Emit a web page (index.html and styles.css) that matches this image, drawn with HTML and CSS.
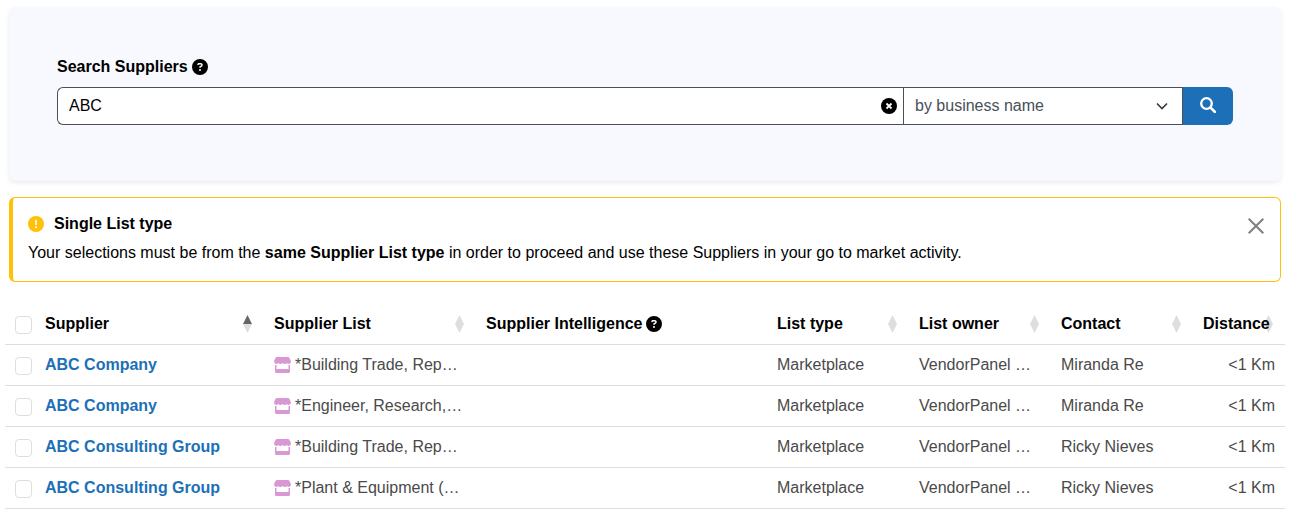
FILE: index.html
```html
<!DOCTYPE html>
<html lang="en">
<head>
    <meta charset="UTF-8">
    <meta name="viewport" content="width=device-width, initial-scale=1.0">
    <title>Search Suppliers</title>
    <link rel="stylesheet" href="styles.css">
</head>
<body>
    <!-- shared icons -->
    <svg class="sprite" aria-hidden="true">
        <symbol id="question" viewBox="0 0 512 512">
            <path fill="currentColor" d="M256 512A256 256 0 1 0 256 0a256 256 0 1 0 0 512zM169.8 165.3c7.9-22.3 29.1-37.3 52.8-37.3h58.3c34.9 0 63.1 28.3 63.1 63.1c0 22.6-12.1 43.5-31.7 54.8L280 264.4c-.2 13-10.9 23.6-24 23.6c-13.3 0-24-10.7-24-24V250.5c0-8.6 4.6-16.5 12.1-20.8l44.3-25.4c4.7-2.7 7.6-7.7 7.6-13.1c0-8.4-6.8-15.1-15.1-15.1H222.6c-3.4 0-6.4 2.1-7.5 5.3l-.4 1.2c-4.4 12.5-18.2 19-30.6 14.6s-19-18.2-14.6-30.6l.4-1.2zM224 352a32 32 0 1 1 64 0 32 32 0 1 1 -64 0z"/>
        </symbol>
        <symbol id="store" viewBox="0 0 17 16">
            <path fill="currentColor" d="M3 0h11q1 0 1.500 1l1.300 2.800q.500 2.700-2 3.200q-1.300 0-2-1q-.800 1-2.100 1t-2.200-1q-.900 1-2.200 1t-2.100-1q-.700 1-2 1q-2.500-.500-2-3.200l1.300-2.800q.500-1 1.500-1z"/>
            <path fill="currentColor" d="M1 8h1.500v4h12v-4h1.500v6.500q0 1.500-1.500 1.500h-12q-1.500 0-1.500-1.500z"/>
        </symbol>
        <symbol id="sort" viewBox="0 0 9 18">
            <path fill="currentColor" d="M4.500 0L9 9H0z"/>
            <path fill="#dedede" d="M0 9h9L4.500 18z"/>
        </symbol>
    </svg>

    <form class="searchPanel">
        <div class="searchLabel">
            <label for="supplierSearch">Search Suppliers</label>
            <svg class="icon"><use href="#question"/></svg>
        </div>
        <div class="searchGroup">
            <div class="searchText">
                <input type="text" id="supplierSearch" name="search" value="ABC">
                <button type="button" class="clearButton" aria-label="Clear">
                    <svg class="icon" viewBox="0 0 16 16">
                        <circle cx="8" cy="8" r="8"/>
                        <path d="M5.500 5.500l5 5M10.500 5.500l-5 5" stroke="#fff" stroke-width="1.800"/>
                    </svg>
                </button>
            </div>
            <div class="searchBy">
                <select name="searchBy" aria-label="Search by">
                    <option>by business name</option>
                </select>
                <svg class="chevron" viewBox="0 0 12 12"><path d="M1 3.500l5 5l5-5" fill="none" stroke="#343a40" stroke-width="1.600"/></svg>
            </div>
            <button type="submit" class="searchButton" aria-label="Search">
                <svg class="icon" viewBox="0 0 16 16"><path d="M10.800 10.800L15 15" stroke="#fff" stroke-width="2.600" stroke-linecap="round"/><circle cx="6.500" cy="6.500" r="5.300" fill="none" stroke="#fff" stroke-width="2.300"/></svg>
            </button>
        </div>
    </form>

    <div class="notice" role="alert">
        <div>
            <div class="noticeTitle">
                <svg class="icon" viewBox="0 0 16 16">
                    <circle cx="8" cy="8" r="8" fill="#ffc107"/>
                    <path d="M8 4.500v4" stroke="#fff" stroke-width="1.600" stroke-linecap="round"/>
                    <circle cx="8" cy="11.300" r="1" fill="#fff"/>
                </svg>
                <span>Single List type</span>
            </div>
            <p>Your selections must be from the <b>same Supplier List type</b> in order to proceed and use these Suppliers in your go to market activity.</p>
        </div>
        <button type="button" class="closeButton" aria-label="Close">
            <svg class="icon" viewBox="0 0 16 16"><path d="M.700 .700l14.600 14.600M15.300 .700L.700 15.300" stroke="#7f7f7f" stroke-width="2"/></svg>
        </button>
    </div>

    <table class="suppliers">
        <colgroup>
            <col class="colCheck">
            <col class="colSupplier">
            <col class="colList">
            <col class="colIntel">
            <col class="colInfo">
            <col class="colInfo">
            <col class="colInfo">
            <col class="colDistance">
        </colgroup>
        <thead>
            <tr>
                <th class="check"><input type="checkbox" aria-label="Select all"></th>
                <th>Supplier<svg class="sort sortAsc"><use href="#sort"/></svg></th>
                <th>Supplier List<svg class="sort"><use href="#sort"/></svg></th>
                <th><span class="withIcon">Supplier Intelligence <svg class="icon"><use href="#question"/></svg></span></th>
                <th>List type<svg class="sort"><use href="#sort"/></svg></th>
                <th>List owner<svg class="sort"><use href="#sort"/></svg></th>
                <th>Contact<svg class="sort"><use href="#sort"/></svg></th>
                <th>Distance<svg class="sort"><use href="#sort"/></svg></th>
            </tr>
        </thead>
        <tbody>
            <tr>
                <td class="check"><input type="checkbox" aria-label="Select ABC Company"></td>
                <td><a href="#">ABC Company</a></td>
                <td><span class="withIcon"><svg class="storeIcon"><use href="#store"/></svg>*Building Trade, Rep…</span></td>
                <td></td>
                <td>Marketplace</td>
                <td>VendorPanel …</td>
                <td>Miranda Re</td>
                <td class="distance">&lt;1 Km</td>
            </tr>
            <tr>
                <td class="check"><input type="checkbox" aria-label="Select ABC Company"></td>
                <td><a href="#">ABC Company</a></td>
                <td><span class="withIcon"><svg class="storeIcon"><use href="#store"/></svg>*Engineer, Research,…</span></td>
                <td></td>
                <td>Marketplace</td>
                <td>VendorPanel …</td>
                <td>Miranda Re</td>
                <td class="distance">&lt;1 Km</td>
            </tr>
            <tr>
                <td class="check"><input type="checkbox" aria-label="Select ABC Consulting Group"></td>
                <td><a href="#">ABC Consulting Group</a></td>
                <td><span class="withIcon"><svg class="storeIcon"><use href="#store"/></svg>*Building Trade, Rep…</span></td>
                <td></td>
                <td>Marketplace</td>
                <td>VendorPanel …</td>
                <td>Ricky Nieves</td>
                <td class="distance">&lt;1 Km</td>
            </tr>
            <tr>
                <td class="check"><input type="checkbox" aria-label="Select ABC Consulting Group"></td>
                <td><a href="#">ABC Consulting Group</a></td>
                <td><span class="withIcon"><svg class="storeIcon"><use href="#store"/></svg>*Plant &amp; Equipment (…</span></td>
                <td></td>
                <td>Marketplace</td>
                <td>VendorPanel …</td>
                <td>Ricky Nieves</td>
                <td class="distance">&lt;1 Km</td>
            </tr>
        </tbody>
    </table>
</body>
</html>
```
FILE: styles.css
```css
*{
    box-sizing: border-box;
}
body{
    margin: 0;
    padding: 7px 9px 0 5px;
    font-family: Arial, "Liberation Sans", sans-serif;
    font-size: 16px;
    line-height: 24px;
    color: #000;
    background: #fff;
}
button{
    padding: 0;
    border: 0;
    background: none;
    cursor: pointer;
}
.sprite{
    display: none;
}
.icon{
    display: block;
    flex: none;
    width: 16px;
    height: 16px;
}

/* search */
.searchPanel{
    margin: 0 4px 16px;
    padding: 48px 48px 56px;
    border-radius: 6px;
    background: #f8f9fe;
    box-shadow: 0 2px 4px rgba(0, 0, 0, 0.08);
}
.searchLabel{
    display: flex;
    align-items: center;
    gap: 4px;
    margin-bottom: 8px;
    font-weight: bold;
}
.searchGroup{
    display: flex;
    height: 38px;
}
.searchText{
    position: relative;
    flex: 1;
}
.searchText input, .searchBy select{
    display: block;
    width: 100%;
    height: 38px;
    margin: 0;
    padding: 0 11px;
    border: 1px solid #495057;
    background: #fff;
    font: inherit;
    color: #000;
    outline: none;
}
.searchText input{
    padding-right: 32px;
    border-right: 0;
    border-radius: 6px 0 0 6px;
}
.clearButton{
    position: absolute;
    top: 11px;
    right: 6px;
}
.searchBy{
    position: relative;
    flex: 0 0 280px;
}
.searchBy select{
    appearance: none;
    border-radius: 0;
    color: #495057;
}
.chevron{
    position: absolute;
    top: 13px;
    right: 15px;
    width: 12px;
    height: 12px;
    pointer-events: none;
}
.searchButton{
    display: flex;
    align-items: center;
    justify-content: center;
    width: 50px;
    padding-bottom: 2px;
    border-radius: 0 6px 6px 0;
    background: #1d70b7;
    color: #fff;
}

/* notice */
.notice{
    display: flex;
    justify-content: space-between;
    align-items: flex-start;
    margin: 0 4px 22px;
    padding: 14px 16px 16px 15px;
    border: 1px solid #ffc107;
    border-left-width: 4px;
    border-radius: 6px;
}
.notice p{
    margin: 5px 0 0;
}
.noticeTitle{
    display: flex;
    align-items: center;
    gap: 10px;
    font-weight: bold;
}
.closeButton{
    margin-top: 6px;
}

/* table */
.suppliers{
    width: 100%;
    table-layout: fixed;
    border-collapse: separate;
    border-spacing: 0;
}
.colCheck{ width: 30px; }
.colSupplier{ width: 229px; }
.colList{ width: 212px; }
.colIntel{ width: 291px; }
.colInfo{ width: 142px; }
.colDistance{ width: 92px; }
.suppliers th, .suppliers td{
    position: relative;
    height: 41px;
    padding: 0 10px;
    border-bottom: 1px solid #dedede;
    text-align: left;
    white-space: nowrap;
    color: #4a4a4a;
}
.suppliers th{
    color: #000;
}
.suppliers .check{
    padding-right: 0;
}
.suppliers .distance{
    text-align: right;
}
.suppliers a{
    color: #1d70b7;
    font-weight: bold;
    text-decoration: none;
}
.suppliers input{
    display: block;
    appearance: none;
    width: 17px;
    height: 18px;
    margin: 1px 0 0;
    border: 1px solid #dedede;
    border-radius: 4px;
    background: #fff;
}
.withIcon{
    display: flex;
    align-items: center;
    gap: 4px;
}
.storeIcon{
    flex: none;
    width: 17px;
    height: 16px;
    color: #d998d3;
}
.sort{
    position: absolute;
    top: 11px;
    right: 12px;
    z-index: -1;
    width: 9px;
    height: 18px;
    color: #dedede;
}
.sortAsc{
    color: #666;
}
```
